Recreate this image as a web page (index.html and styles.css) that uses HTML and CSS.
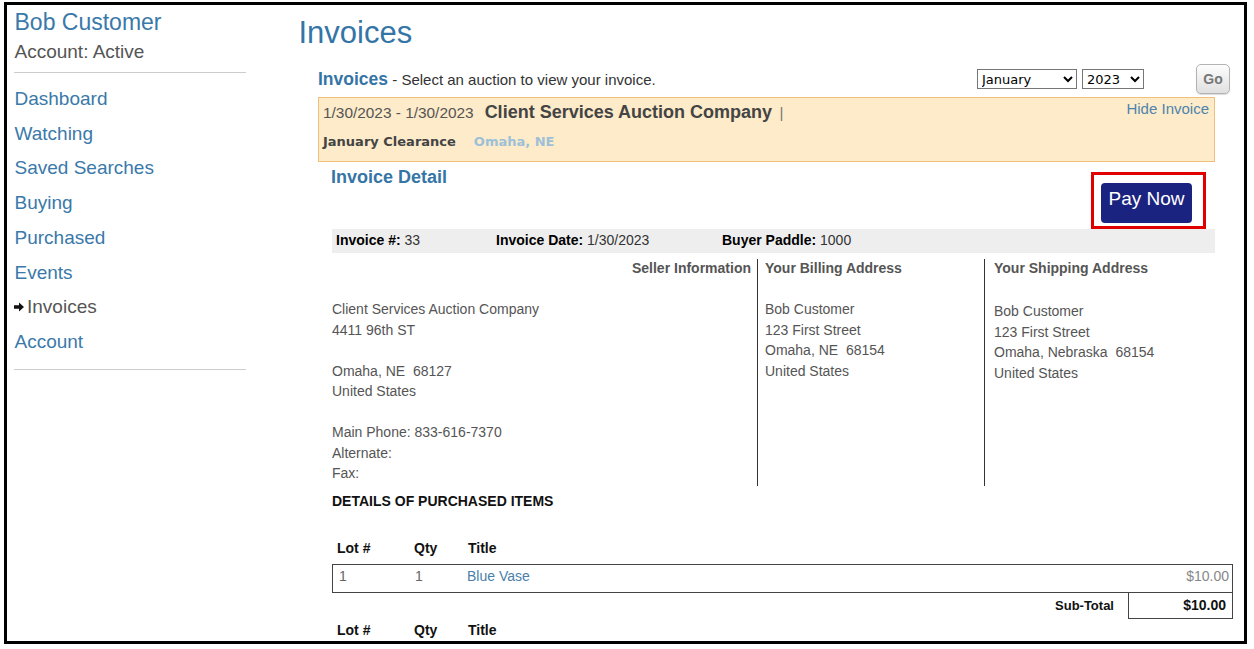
FILE: index.html
```html
<!DOCTYPE html>
<html lang="en">
<head>
  <meta charset="UTF-8">
  <meta name="viewport" content="width=device-width, initial-scale=1.0">
  <title>Invoices</title>
  <link rel="stylesheet" href="styles.css">
</head>
<body>
  <div class="frame">
    <aside class="sidebar">
      <div class="user-name">Bob Customer</div>
      <div class="user-status">Account: Active</div>
      <hr>
      <ul class="nav">
        <li><a href="#">Dashboard</a></li>
        <li><a href="#">Watching</a></li>
        <li><a href="#">Saved Searches</a></li>
        <li><a href="#">Buying</a></li>
        <li><a href="#">Purchased</a></li>
        <li><a href="#">Events</a></li>
        <li class="current">
          <svg class="nav-arrow" width="10" height="10" viewBox="0 0 10 10"><path d="M0 3.3h5V0.4L10 5 5 9.6V6.7H0z" fill="#111"/></svg>Invoices
        </li>
        <li><a href="#">Account</a></li>
      </ul>
      <hr class="nav-end">
    </aside>

    <main class="main">
      <h1>Invoices</h1>
      <div class="panel">
        <div class="panel-head">
          <div class="panel-intro"><span class="panel-title">Invoices</span> - Select an auction to view your invoice.</div>
          <div class="filters">
            <select class="month">
              <option>January</option>
              <option>February</option>
              <option>March</option>
            </select>
            <select class="year">
              <option>2023</option>
              <option>2022</option>
            </select>
            <button class="go">Go</button>
          </div>
        </div>

        <div class="auction">
          <div class="auction-top">
            <div class="auction-title">
              <span class="auction-dates">1/30/2023 - 1/30/2023</span><span class="auction-company">Client Services Auction Company</span><span class="sep">|</span>
            </div>
            <a href="#" class="hide-link">Hide Invoice</a>
          </div>
          <div class="auction-sub">
            <span class="sale-name">January Clearance</span><span class="sale-place">Omaha, NE</span>
          </div>
        </div>

        <div class="detail">
          <div class="detail-head">
            <h2>Invoice Detail</h2>
            <div class="pay-frame">
              <button class="pay-btn">Pay Now</button>
            </div>
          </div>

          <div class="info-bar">
            <div><b>Invoice #:</b> 33</div>
            <div><b>Invoice Date:</b> 1/30/2023</div>
            <div><b>Buyer Paddle:</b> 1000</div>
          </div>

          <div class="columns">
            <div class="col col-seller">
              <div class="col-title">Seller Information</div>
              <div class="col-body">
                Client Services Auction Company<br>
                4411 96th ST<br>
                <br>
                Omaha, NE&nbsp; 68127<br>
                United States<br>
                <br>
                Main Phone: 833-616-7370<br>
                Alternate:<br>
                Fax:
              </div>
            </div>
            <div class="col col-billing">
              <div class="col-title">Your Billing Address</div>
              <div class="col-body">
                Bob Customer<br>
                123 First Street<br>
                Omaha, NE&nbsp; 68154<br>
                United States
              </div>
            </div>
            <div class="col col-shipping">
              <div class="col-title">Your Shipping Address</div>
              <div class="col-body">
                Bob Customer<br>
                123 First Street<br>
                Omaha, Nebraska&nbsp; 68154<br>
                United States
              </div>
            </div>
          </div>

          <div class="items-title">DETAILS OF PURCHASED ITEMS</div>

          <div class="items-head">
            <span>Lot #</span><span>Qty</span><span>Title</span>
          </div>
          <div class="item-row">
            <span>1</span><span>1</span><a href="#">Blue Vase</a><span class="price">$10.00</span>
          </div>
          <div class="subtotal">
            <span class="subtotal-label">Sub-Total</span>
            <span class="subtotal-value">$10.00</span>
          </div>

          <div class="items-head next">
            <span>Lot #</span><span>Qty</span><span>Title</span>
          </div>
        </div>
      </div>
    </main>
  </div>
</body>
</html>
```

FILE: styles.css
```css
body {
  margin: 0;
  background: #fff;
  font-family: "Liberation Sans", Arial, sans-serif;
  color: #555;
}

a {
  color: #3a79a9;
  text-decoration: none;
}

.frame {
  display: flex;
  box-sizing: border-box;
  width: 1243px;
  height: 642px;
  margin: 2px 0 0 4px;
  border: 3px solid #000;
  overflow: hidden;
}

/* left column */
.sidebar {
  flex: none;
  width: 231.5px;
  padding: 4px 0 0 7.5px;
}

.user-name {
  font-size: 23px;
  line-height: 26px;
  color: #3a79a9;
}

.user-status {
  margin-top: 5px;
  font-size: 19px;
  line-height: 24px;
  color: #555;
}

.sidebar hr {
  margin: 8px 0 0 -1px;
  border: 0;
  border-top: 1px solid #ccc;
}

.nav {
  list-style: none;
  margin: 9px 0 0;
  padding: 0;
  font-size: 19px;
  line-height: 34.7px;
}

.nav .current {
  color: #555;
}

.nav-arrow {
  margin: 0 3px 0 -0.5px;
  vertical-align: 1px;
}

.sidebar .nav-end {
  margin-top: 9.7px;
}

/* main column */
.main {
  flex: 1;
  margin-left: 52.5px;
  padding: 10px 11px 0 0;
}

h1 {
  margin: 0;
  font-size: 31px;
  line-height: 36px;
  font-weight: normal;
  color: #3575a6;
}

.panel {
  padding-left: 19.5px;
}

.panel-head {
  display: flex;
  align-items: center;
  justify-content: space-between;
  height: 30px;
  margin-top: 13px;
}

.panel-intro {
  font-size: 15px;
  line-height: 20px;
  color: #333;
}

.panel-title {
  font-size: 17.5px;
  font-weight: bold;
  color: #3575a6;
}

.filters {
  display: flex;
  align-items: center;
  margin-right: 3px;
}

.filters select {
  box-sizing: border-box;
  height: 20px;
  border: 1px solid #767676;
  border-radius: 0;
  background: #fff;
  font-family: "DejaVu Sans", Verdana, sans-serif;
  font-size: 13px;
  color: #000;
}

.month {
  width: 100px;
}

.year {
  width: 62px;
  margin-left: 5px;
}

.go {
  width: 34px;
  height: 30px;
  margin-left: 52px;
  padding: 0;
  border: 1px solid #b3b3b3;
  border-radius: 5px;
  background: linear-gradient(#fdfdfd, #e0e0e0);
  box-shadow: 0 1px 1px rgba(0, 0, 0, 0.15);
  font-family: "Liberation Sans", Arial, sans-serif;
  font-size: 14px;
  font-weight: bold;
  color: #777;
}

/* selected auction */
.auction {
  margin: 3px 18px 0 0;
  padding: 3px 5px 9.5px 4px;
  border: 1px solid #f0c07a;
  background: #fdebc9;
}

.auction-top {
  display: flex;
  justify-content: space-between;
  align-items: flex-start;
}

.auction-title {
  font-size: 18px;
  line-height: 22px;
}

.auction-dates {
  font-size: 15.4px;
  color: #555;
}

.auction-company {
  margin-left: 11px;
  font-weight: bold;
  color: #444;
}

.sep {
  margin-left: 7.5px;
  font-size: 15px;
  color: #777;
}

.hide-link {
  font-size: 15px;
  line-height: 16px;
  color: #4d84ae;
}

.auction-sub {
  margin-top: 7.5px;
  font-family: "DejaVu Sans", Verdana, sans-serif;
  font-size: 13px;
  font-weight: bold;
  line-height: 20px;
}

.sale-name {
  color: #444;
}

.sale-place {
  margin-left: 18px;
  color: #9dc0d8;
}

/* invoice detail */
.detail {
  padding-left: 14px;
}

.detail-head {
  display: flex;
  justify-content: space-between;
  align-items: flex-start;
  height: 67px;
  margin-right: 18px;
}

.detail-head h2 {
  margin: 4px 0 0 -1px;
  font-size: 18px;
  line-height: 22px;
  color: #3575a6;
}

.pay-frame {
  margin: 10px 9px 0 0;
  padding: 8px 11px 3px 7px;
  border: 3px solid #e00000;
}

.pay-btn {
  display: block;
  box-sizing: border-box;
  width: 91px;
  height: 40px;
  padding: 0 0 9px;
  border: 0;
  border-radius: 4px;
  background: #1b2380;
  color: #fff;
  font-family: "Liberation Sans", Arial, sans-serif;
  font-size: 19px;
  line-height: 31px;
}

.info-bar {
  display: grid;
  grid-template-columns: 160px 226px 1fr;
  box-sizing: border-box;
  height: 24px;
  margin-right: 18px;
  padding-left: 4px;
  background: #eee;
  font-size: 14px;
  line-height: 22px;
  color: #333;
}

.info-bar b {
  color: #000;
}

.columns {
  display: grid;
  grid-template-columns: 425px 227px 1fr;
  height: 227px;
  margin: 6px 18px 0 0;
}

.col + .col {
  border-left: 1px solid #333;
}

.col-title {
  font-size: 14px;
  font-weight: bold;
  line-height: 18px;
  color: #555;
}

.col-seller .col-title {
  text-align: right;
  padding-right: 6px;
}

.col-billing {
  padding-left: 7px;
}

.col-shipping {
  padding-left: 9px;
}

.col-body {
  margin-top: 22px;
  font-size: 14px;
  line-height: 20.5px;
  color: #555;
}

.col-shipping .col-body {
  margin-top: 24px;
}

/* purchased items */
.items-title {
  margin-top: 5px;
  font-size: 14px;
  font-weight: bold;
  line-height: 20px;
  color: #111;
}

.items-head {
  display: grid;
  grid-template-columns: 77px 54px 1fr;
  margin-top: 27px;
  padding-left: 5px;
  font-size: 14px;
  font-weight: bold;
  line-height: 20px;
  color: #111;
}

.items-head.next {
  margin-top: 1px;
}

.item-row {
  display: grid;
  grid-template-columns: 76px 52px 1fr auto;
  margin-top: 6px;
  padding: 1px 3px 6px 6px;
  border: 1px solid #444;
  font-size: 14px;
  line-height: 20px;
  color: #666;
}

.item-row a {
  color: #4a7fab;
}

.price {
  color: #888;
}

.subtotal {
  display: flex;
  justify-content: flex-end;
  font-weight: bold;
  line-height: 25px;
  color: #111;
}

.subtotal-label {
  padding-right: 14px;
  font-size: 13px;
}

.subtotal-value {
  box-sizing: border-box;
  width: 105px;
  height: 26px;
  padding-right: 6px;
  border: 1px solid #444;
  border-top: 0;
  text-align: right;
  font-size: 14px;
}
```
